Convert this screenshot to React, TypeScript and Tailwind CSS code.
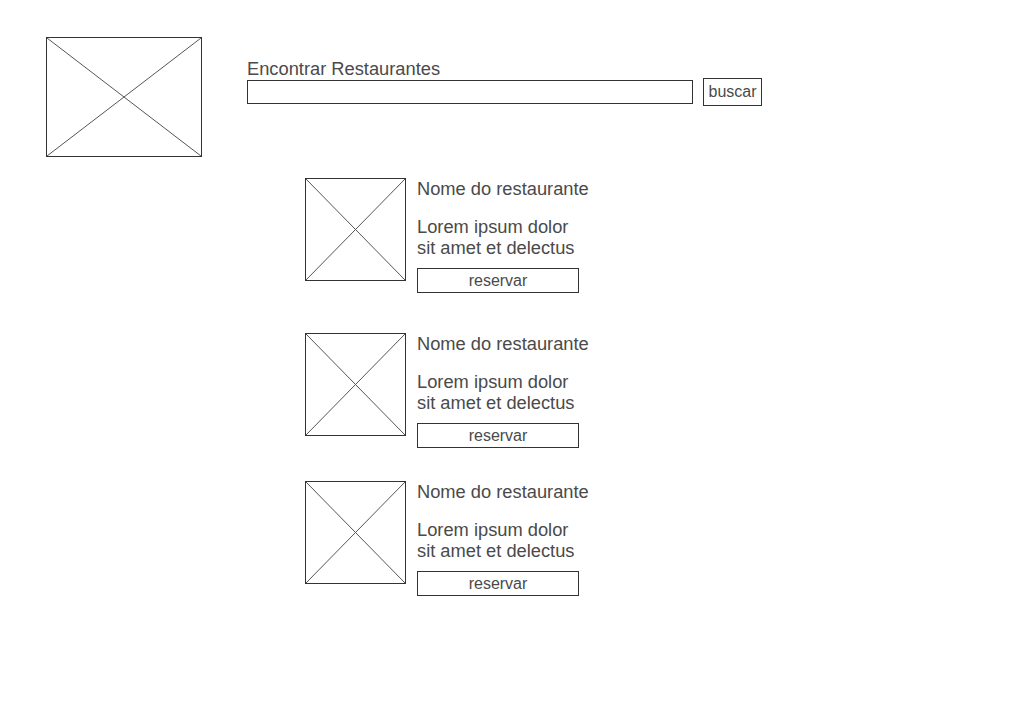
import React from "react";

const font = { fontFamily: '"Liberation Sans", Arial, sans-serif' };

function Placeholder({ className }: { className: string }) {
	return (
		<div className={`relative shrink-0 border border-[#333] bg-white ${className}`}>
			<svg
				className="absolute inset-0 h-full w-full"
				viewBox="0 0 100 100"
				preserveAspectRatio="none"
			>
				<line x1="0" y1="0" x2="100" y2="100" stroke="#555" strokeWidth="1" vectorEffect="non-scaling-stroke" />
				<line x1="100" y1="0" x2="0" y2="100" stroke="#555" strokeWidth="1" vectorEffect="non-scaling-stroke" />
			</svg>
		</div>
	);
}

const restaurants = [
	{ name: "Nome do restaurante", gap: "mt-[21px]" },
	{ name: "Nome do restaurante", gap: "mt-[40px]" },
	{ name: "Nome do restaurante", gap: "mt-[33px]" },
];

export default function App() {
	return (
		<main
			className="min-h-[728px] w-[1024px] bg-white text-[#4a4a4a] pl-[46px] pt-[37px]"
			style={font}
		>
			<div className="flex">
				<Placeholder className="w-[156px] h-[120px]" />
				<div className="ml-[45px] mt-[21px] flex flex-col">
					<div className="text-[18.3px] leading-[21px]">Encontrar Restaurantes</div>
					<div className="-mt-[1px] flex items-center gap-[10px]">
						<input className="h-[24px] w-[446px] border border-[#333] bg-white outline-none" />
						<button className="h-[28px] w-[59px] border border-[#333] bg-white text-[16px] leading-none text-[#4a4a4a]">
							buscar
						</button>
					</div>
				</div>
			</div>

			<div className="ml-[259px] flex flex-col">
				{restaurants.map((r, i) => (
					<div key={i} className={`flex ${r.gap}`}>
						<Placeholder className="w-[101px] h-[103px]" />
						<div className="ml-[11px] flex flex-col">
							<div className="text-[18.3px] leading-[21px]">{r.name}</div>
							<div className="mt-[17px] text-[18.3px] leading-[21px]">
								Lorem ipsum dolor
								<br />
								sit amet et delectus
							</div>
							<button className="mt-[10px] h-[25px] w-[162px] border border-[#333] bg-white text-[16px] leading-none text-[#4a4a4a]">
								reservar
							</button>
						</div>
					</div>
				))}
			</div>
		</main>
	);
}
